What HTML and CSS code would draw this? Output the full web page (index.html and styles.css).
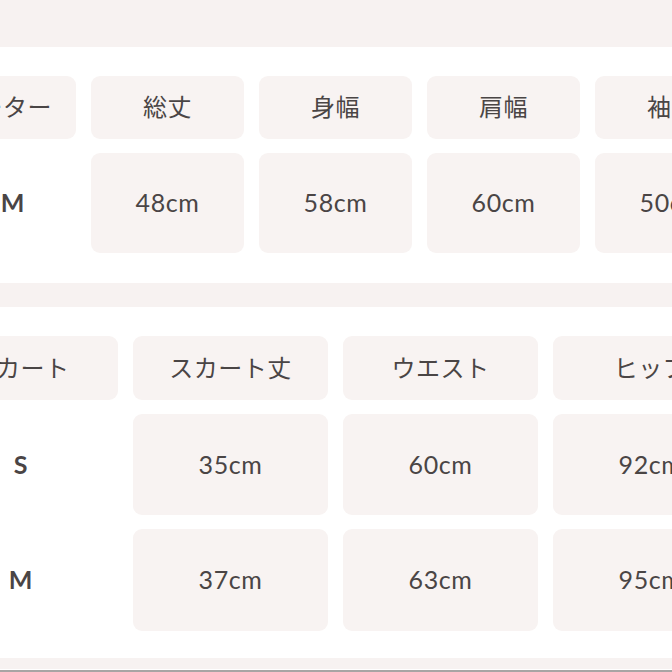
FILE: index.html
```html
<!DOCTYPE html>
<html lang="ja">
<head>
<meta charset="utf-8">
<link rel="stylesheet" href="styles.css">
</head>
<body>
<div class="page">
  <div class="band band-top"></div>
  <div class="table table-tops">
    <div class="cell head first-head"><span>セーター</span></div>
    <div class="cell head">総丈</div>
    <div class="cell head">身幅</div>
    <div class="cell head">肩幅</div>
    <div class="cell head">袖丈</div>

    <div class="label label-tops">M</div>
    <div class="cell val">48cm</div>
    <div class="cell val">58cm</div>
    <div class="cell val">60cm</div>
    <div class="cell val">50cm</div>
  </div>

  <div class="band band-mid"></div>

  <div class="table table-skirt">
    <div class="cell head">スカート</div>
    <div class="cell head">スカート丈</div>
    <div class="cell head">ウエスト</div>
    <div class="cell head">ヒップ</div>

    <div class="label">S</div>
    <div class="cell val">35cm</div>
    <div class="cell val">60cm</div>
    <div class="cell val">92cm</div>

    <div class="label">M</div>
    <div class="cell val">37cm</div>
    <div class="cell val">63cm</div>
    <div class="cell val">95cm</div>
  </div>

  <div class="band band-bottom"></div>
  <div class="edge"></div>
</div>
</body>
</html>
```

FILE: styles.css
```css
html, body {
  margin: 0;
  padding: 0;
  background: #ffffff;
}

.page {
  width: 672px;
  height: 672px;
  overflow: hidden;
  display: flex;
  flex-direction: column;
  font-family: "Lato", "Noto Sans CJK JP", sans-serif;
  color: #4a4545;
}

.band {
  background: #f7f2f1;
  flex: none;
}

.band-top {
  height: 47px;
}

.band-mid {
  height: 24px;
  margin-top: 30px;
}

.band-bottom {
  height: 11px;
  margin-top: 27px;
}

.edge {
  flex: none;
  height: 2px;
  margin-top: 1px;
  background: #a8a4a4;
}

.table {
  display: grid;
  flex: none;
  margin-left: -77px;
  column-gap: 15px;
  row-gap: 14px;
}

.table-tops {
  margin-top: 29px;
  grid-template-columns: repeat(5, 153px);
  grid-template-rows: 63px 100px;
}

.table-skirt {
  margin-top: 29px;
  grid-template-columns: repeat(4, 195px);
  grid-template-rows: 64px 101px 102px;
}

.cell {
  background: #f8f3f2;
  border-radius: 9px;
  display: flex;
  align-items: center;
  justify-content: center;
  white-space: nowrap;
  overflow: hidden;
}

.head {
  font-family: "Noto Sans CJK JP", sans-serif;
  font-size: 24px;
  letter-spacing: 0.5px;
  padding-bottom: 4px;
}

.first-head {
  justify-content: flex-end;
  padding-right: 24px;
}

.val {
  font-size: 25px;
  letter-spacing: 0.6px;
  padding-bottom: 2px;
}

.label {
  display: flex;
  align-items: center;
  justify-content: center;
  font-weight: 700;
  font-size: 25px;
  padding-bottom: 2px;
}

.label-tops {
  padding-left: 26px;
}
```
